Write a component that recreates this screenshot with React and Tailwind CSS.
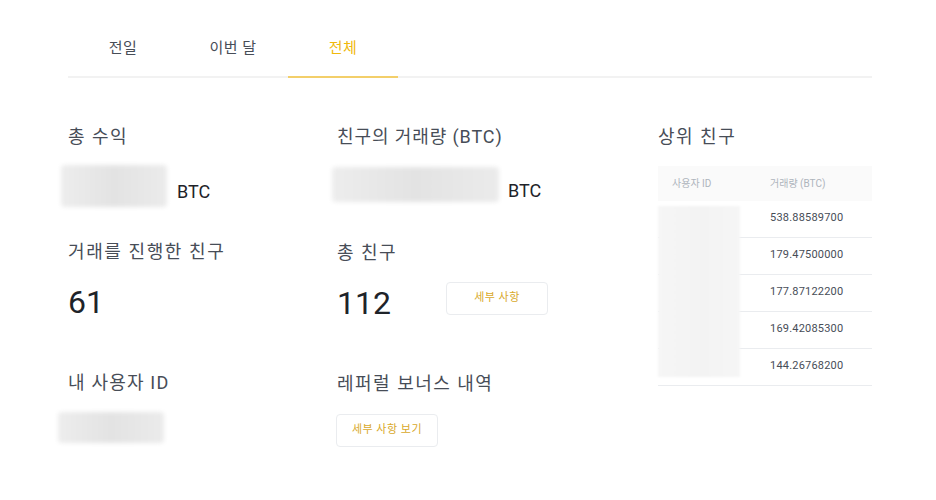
import { useState } from 'react';

const tabs = ['전일', '이번 달', '전체'];

const topFriends = ['538.88589700', '179.47500000', '177.87122200', '169.42085300', '144.26768200'];

const Blur = ({ className }) => (
  <div className={`rounded-sm bg-gradient-to-r from-[#ededed] via-[#e3e3e3] to-[#ebebeb] blur-[2px] ${className}`} />
);

const App = () => {
  const [active, setActive] = useState(2);

  return (
    <div className="min-h-[500px] bg-white px-[64px] font-['Roboto','Noto_Sans_CJK_KR',sans-serif] text-[#474d57]">
      <div className="ml-[4px] w-[804px]">
        {/* tabs */}
        <div className="flex h-[78px] border-b-[2px] border-[#f2f2f2] pt-[20px]">
          {tabs.map((t, i) => (
            <button
              key={t}
              onClick={() => setActive(i)}
              className={`-mb-[2px] flex w-[110px] items-start justify-center pt-[17px] text-[15px] leading-[22px] tracking-[0.5px] ${
                active === i ? 'border-b-[2px] border-[#f3cf6a] text-[#f0b90b]' : 'text-[#474d57]'
              }`}
            >
              {t}
            </button>
          ))}
        </div>

        <div className="grid grid-cols-[269px_321px_214px]">
          {/* column 1 */}
          <div className="flex flex-col pt-[47px]">
            <div className="text-[18px] leading-6 tracking-[1.5px]">총 수익</div>
            <div className="mt-[16px] flex items-end">
              <Blur className="-ml-[7px] h-[42px] w-[106px]" />
              <span className="mb-[3px] ml-[10px] text-[18px] leading-6 text-[#1e2329]">BTC</span>
            </div>
            <div className="mt-[33px] text-[18px] leading-6 tracking-[1.6px]">거래를 진행한 친구</div>
            <div className="mt-[20px] text-[32px] leading-9 text-[#1e2329]">61</div>
            <div className="mt-[51px] text-[18px] leading-6 tracking-[1.2px]">내 사용자 ID</div>
            <Blur className="-ml-[10px] mt-[17px] h-[31px] w-[106px]" />
          </div>

          {/* column 2 */}
          <div className="flex flex-col pt-[47px]">
            <div className="text-[18px] leading-6 tracking-[0.9px]">친구의 거래량 (BTC)</div>
            <div className="mt-[17px] flex items-center">
              <Blur className="-ml-[5px] h-[35px] w-[167px]" />
              <span className="ml-[9px] pt-[13px] text-[18px] leading-6 text-[#1e2329]">BTC</span>
            </div>
            <div className="mt-[38px] text-[18px] leading-6 tracking-[1.5px]">총 친구</div>
            <div className="mt-[20px] flex h-9 items-center">
              <span className="w-[109px] text-[32px] leading-9 text-[#1e2329]">112</span>
              <button className="-mt-[9px] h-[33px] w-[102px] rounded-sm border border-[#eaecef] text-[11px] tracking-[0.5px] text-[#d9a92c]">
                세부 사항
              </button>
            </div>
            <div className="mt-[51px] text-[18px] leading-6 tracking-[1.5px]">레퍼럴 보너스 내역</div>
            <button className="-ml-[1px] mt-[18px] h-[33px] w-[102px] rounded-sm border border-[#eaecef] text-[11px] tracking-[0.5px] text-[#d9a92c]">
              세부 사항 보기
            </button>
          </div>

          {/* column 3 */}
          <div className="flex flex-col pt-[47px]">
            <div className="text-[18px] leading-6 tracking-[1.5px]">상위 친구</div>
            <div className="mt-[17px] flex h-[35px] items-center bg-[#fafafa] text-[10px] text-[#aeb4bc]">
              <span className="w-[112px] pl-[14px]">사용자 ID</span>
              <span>거래량 (BTC)</span>
            </div>
            <div className="relative">
              {topFriends.map((v) => (
                <div key={v} className="flex h-[37px] items-center border-b border-[#eaecef] text-[11px]">
                  <span className="w-[112px]" />
                  <span className="-mt-[2px] tracking-[0.2px]">{v}</span>
                </div>
              ))}
              <div className="absolute left-0 top-[5px] h-[171px] w-[82px] bg-gradient-to-r from-[#f6f6f6] via-[#f3f3f3] to-[#f6f6f6] blur-[1px]" />
            </div>
          </div>
        </div>
      </div>
    </div>
  );
};

export default App;
